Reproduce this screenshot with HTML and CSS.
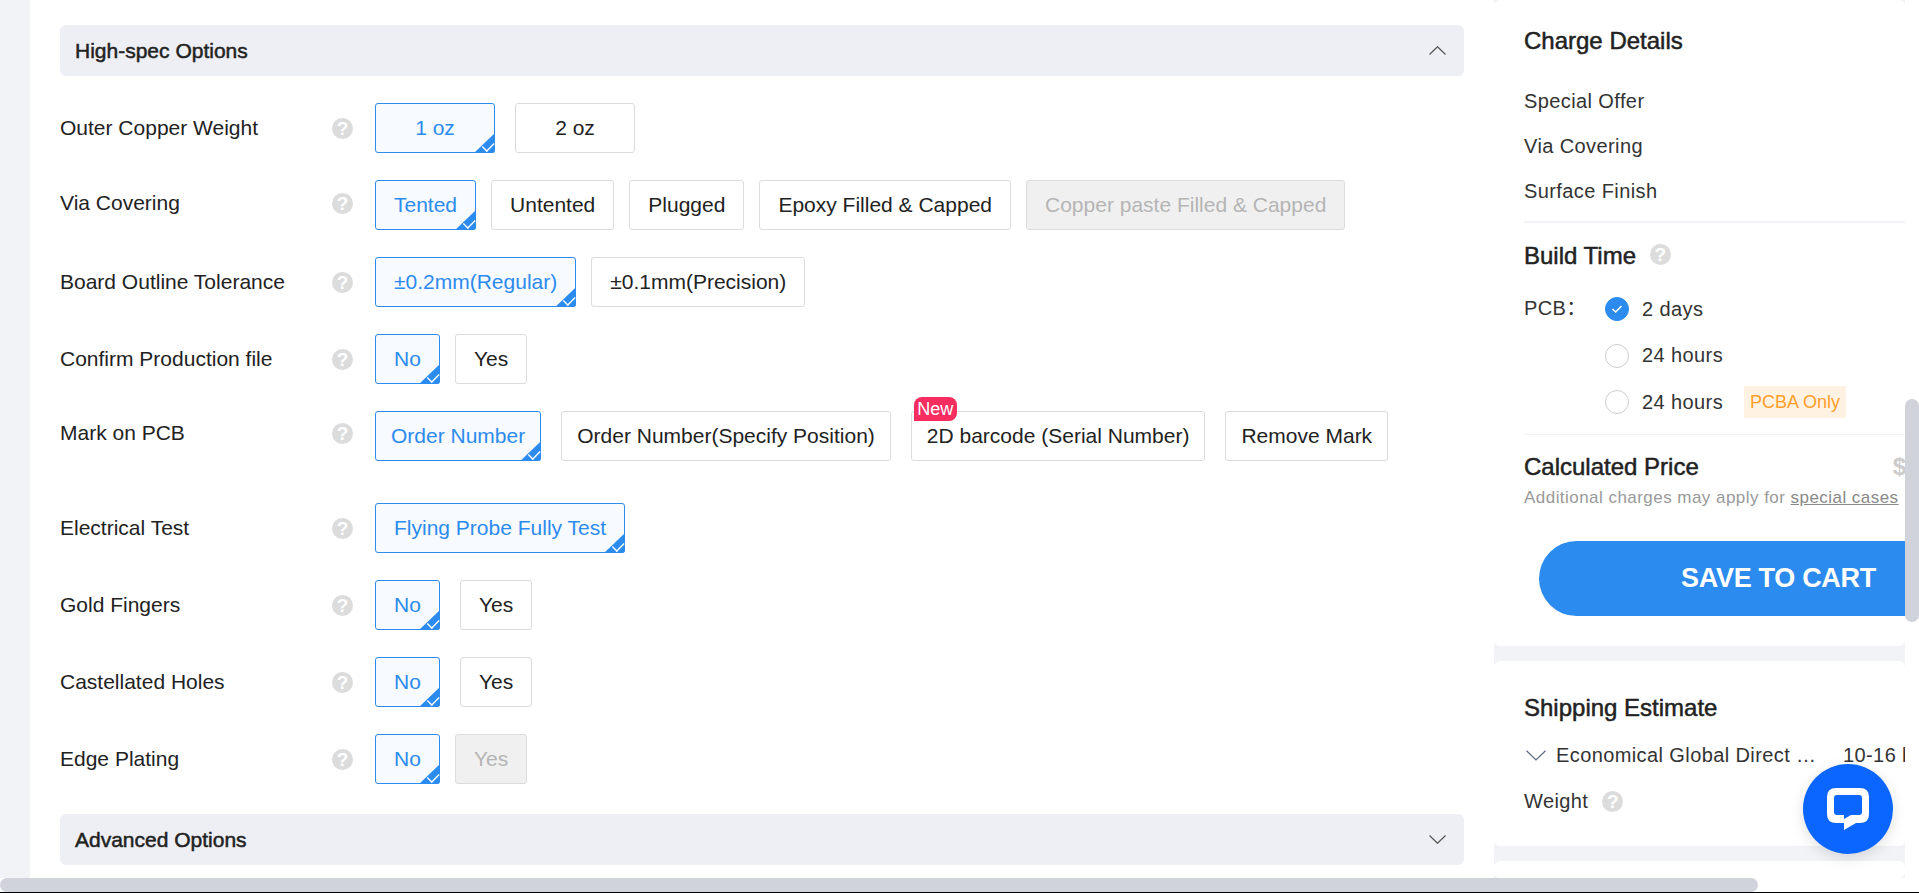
FILE: index.html
```html
<!DOCTYPE html>
<html lang="en">
  <head>
    <meta charset="UTF-8" />
    <title>PCB Order</title>
    <link rel="stylesheet" href="styles.css">
  </head>
  <body>
    <div class="page">
      <div class="strip"></div>

      <div class="main">
        <div class="panel-head">
          <span>High-spec Options</span>
          <svg class="chev" width="17" height="9" viewBox="0 0 17 9"><path d="M0.5 8.5 L8.5 0.7 L16.5 8.5" /></svg>
        </div>

        <div class="row row-wide">
          <div class="row-label"><span class="name">Outer Copper Weight</span><span class="help">?</span></div>
          <div class="opt on oz">1 oz</div>
          <div class="opt oz">2 oz</div>
        </div>

        <div class="row">
          <div class="row-label up"><span class="name">Via Covering</span><span class="help">?</span></div>
          <div class="opt on">Tented</div>
          <div class="opt">Untented</div>
          <div class="opt">Plugged</div>
          <div class="opt">Epoxy Filled &amp; Capped</div>
          <div class="opt off">Copper paste Filled &amp; Capped</div>
        </div>

        <div class="row">
          <div class="row-label"><span class="name">Board Outline Tolerance</span><span class="help">?</span></div>
          <div class="opt on">±0.2mm(Regular)</div>
          <div class="opt">±0.1mm(Precision)</div>
        </div>

        <div class="row">
          <div class="row-label"><span class="name">Confirm Production file</span><span class="help">?</span></div>
          <div class="opt on no">No</div>
          <div class="opt yes">Yes</div>
        </div>

        <div class="row row-wide row-tight">
          <div class="row-label up-more"><span class="name">Mark on PCB</span><span class="help">?</span></div>
          <div class="opt on">Order Number</div>
          <div class="opt">Order Number(Specify Position)</div>
          <div class="opt has-tag"><span class="tag">New</span>2D barcode (Serial Number)</div>
          <div class="opt">Remove Mark</div>
        </div>

        <div class="row row-after-mark">
          <div class="row-label"><span class="name">Electrical Test</span><span class="help">?</span></div>
          <div class="opt on">Flying Probe Fully Test</div>
        </div>

        <div class="row row-wide">
          <div class="row-label"><span class="name">Gold Fingers</span><span class="help">?</span></div>
          <div class="opt on no">No</div>
          <div class="opt yes">Yes</div>
        </div>

        <div class="row row-wide">
          <div class="row-label"><span class="name">Castellated Holes</span><span class="help">?</span></div>
          <div class="opt on no">No</div>
          <div class="opt yes">Yes</div>
        </div>

        <div class="row">
          <div class="row-label"><span class="name">Edge Plating</span><span class="help">?</span></div>
          <div class="opt on no">No</div>
          <div class="opt yes off">Yes</div>
        </div>

        <div class="panel-head panel-head-last">
          <span>Advanced Options</span>
          <svg class="chev" width="17" height="9" viewBox="0 0 17 9"><path d="M0.5 0.5 L8.5 8.3 L16.5 0.5" /></svg>
        </div>
      </div>

      <div class="side">
        <div class="card card-price">
          <h3 class="title title-charge">Charge Details</h3>
          <div class="charge first">Special Offer</div>
          <div class="charge">Via Covering</div>
          <div class="charge">Surface Finish</div>
          <div class="rule"></div>

          <h3 class="title title-build">Build Time <span class="help">?</span></h3>
          <div class="build">
            <div class="build-label">PCB：</div>
            <div class="build-opts">
              <div class="radio-row">
                <span class="radio checked">
                  <svg width="12" height="10" viewBox="0 0 12 10"><path d="M1.5 5 L4.7 8 L10.5 2" /></svg>
                </span>
                2 days
              </div>
              <div class="radio-row"><span class="radio"></span>24 hours</div>
              <div class="radio-row"><span class="radio"></span>24 hours<span class="only">PCBA Only</span></div>
            </div>
          </div>
          <div class="rule rule-thin"></div>

          <div class="price-line">
            <h3 class="title">Calculated Price</h3>
            <span class="price">$</span>
          </div>
          <div class="price-note">Additional charges may apply for <u>special cases</u></div>
          <div class="save">SAVE TO CART</div>
        </div>

        <div class="card card-ship">
          <h3 class="title">Shipping Estimate</h3>
          <div class="ship-row">
            <svg class="ship-chev" width="20" height="11" viewBox="0 0 20 11"><path d="M0.5 0.8 L10 10 L19.5 0.8" /></svg>
            <span class="ship-name">Economical Global Direct …</span>
            <span class="ship-days">10-16 business days</span>
          </div>
          <div class="weight">Weight <span class="help">?</span></div>
        </div>

        <div class="card card-rest"></div>
      </div>

      <div class="gutter"><div class="thumb-y"></div></div>
    </div>

    <div class="hbar"><div class="thumb-x"></div></div>

    <div class="chat">
      <svg width="42" height="42" viewBox="0 0 42 42">
        <path fill="#fff" fill-rule="evenodd" d="M9 0 H33 Q42 0 42 9 V26 Q42 35 33 35 H29 L17 42 V35 H9 Q0 35 0 26 V9 Q0 0 9 0 Z M10 7 Q7 7 7 10 V24 Q7 27 10 27 H17 V31 L24 27 H32 Q35 27 35 24 V10 Q35 7 32 7 Z" />
      </svg>
    </div>
  </body>
</html>
```

FILE: styles.css
```css
* {
  box-sizing: border-box;
}
html,
body {
  margin: 0;
  height: 100%;
  overflow: hidden;
}
body {
  font-family: "Liberation Sans", Arial, "Noto Sans CJK SC", sans-serif;
  font-size: 20px;
  color: #222;
  background: #fff;
  border-bottom: 1px solid #000;
  position: relative;
}
.page {
  display: flex;
  height: 878px;
}
.strip {
  width: 30px;
  background: #f2f3f7;
}
.main {
  width: 1464px;
  padding: 25px 30px 0;
  font-size: 21px;
}
.panel-head {
  display: flex;
  align-items: center;
  justify-content: space-between;
  height: 51px;
  padding: 1px 18px 0 15px;
  background: #eeeff4;
  border-radius: 6px;
  font-size: 21px;
  -webkit-text-stroke: 0.5px #222;
}
.panel-head-last {
  margin-top: 30px;
}
.chev {
  margin-top: -2px;
}
.chev path {
  fill: none;
  stroke: #555;
  stroke-width: 1.2;
}

.row {
  display: flex;
  align-items: center;
  gap: 15px;
  height: 50px;
  margin-top: 27px;
}
.row-wide {
  gap: 20px;
}
.row-after-mark {
  margin-top: 42px;
}
.row-label {
  display: flex;
  align-items: center;
  justify-content: space-between;
  width: 315px;
  padding-right: 22px;
  margin-right: -15px;
}
.row-wide .row-label {
  margin-right: -20px;
}
.row-label.up {
  margin-bottom: 4px;
}
.row-label.up-more {
  margin-bottom: 6px;
}
.help {
  display: inline-block;
  flex: none;
  width: 21px;
  height: 21px;
  line-height: 21px;
  border-radius: 50%;
  background: #dcdcdc;
  color: #fff;
  font-size: 19px;
  font-weight: 700;
  text-align: center;
  letter-spacing: 0;
  -webkit-text-stroke: 0;
}

.opt {
  position: relative;
  display: flex;
  align-items: center;
  justify-content: center;
  height: 50px;
  padding: 0 18px;
  border: 1px solid #dcdcdc;
  border-radius: 3px;
  color: #222;
  white-space: nowrap;
}
.row-tight .opt {
  padding: 0 15px;
}
.oz {
  width: 120px;
}
.no {
  width: 65px;
}
.yes {
  width: 72px;
}
.on {
  border-color: #2c8bee;
  background: #f7faff;
  color: #2c8bee;
}
.on::after {
  content: "";
  position: absolute;
  right: -1px;
  bottom: -1px;
  width: 21px;
  height: 20px;
  background: #2c8bee;
  clip-path: polygon(100% 0, 100% 100%, 0 100%);
  border-bottom-right-radius: 3px;
}
.on::before {
  content: "";
  position: absolute;
  z-index: 1;
  right: 2.5px;
  bottom: 4.75px;
  width: 7px;
  height: 3.5px;
  border-left: 1px solid #fff;
  border-bottom: 1px solid #fff;
  transform: rotate(-45deg) scale(1.4);
}
.off {
  background: #f0f0f0;
  color: #b5b5b5;
}
.tag {
  position: absolute;
  left: 2px;
  top: -15px;
  width: 43px;
  height: 24px;
  line-height: 24px;
  border-radius: 8px 8px 8px 0;
  background: #f72c5f;
  color: #fff;
  font-size: 18px;
  text-align: center;
}

.side {
  width: 411px;
  display: flex;
  flex-direction: column;
  gap: 15px;
  background: #f2f3f7;
  overflow: hidden;
}
.card {
  flex: none;
  background: #fff;
  padding-left: 30px;
  border-radius: 6px;
  overflow: hidden;
}
.card-price {
  height: 646px;
  padding-top: 26px;
}
.card-ship {
  height: 185px;
  padding-top: 32px;
}
.card-rest {
  flex: 1;
}
.title {
  margin: 0;
  font-size: 24px;
  font-weight: 400;
  line-height: 30px;
  -webkit-text-stroke: 0.5px #222;
}
.charge {
  line-height: 45px;
  color: #333;
  letter-spacing: 0.4px;
}
.charge.first {
  margin-top: 23px;
}
.rule {
  height: 2px;
  margin-top: 7px;
  background: #f2f3f7;
}
.title-build {
  margin-top: 18px;
}
.title-build .help {
  margin-left: 7px;
  vertical-align: 3px;
}
.build {
  display: flex;
  margin-top: 15px;
  letter-spacing: 0.4px;
  color: #333;
}
.build-label {
  width: 81px;
  line-height: 44px;
}
.radio-row {
  display: flex;
  align-items: center;
  height: 46.5px;
}
.radio {
  display: flex;
  align-items: center;
  justify-content: center;
  width: 24px;
  height: 24px;
  margin-right: 13px;
  border: 1px solid #ccc;
  border-radius: 50%;
}
.radio.checked {
  background: #2c8bee;
  border-color: #2c8bee;
}
.radio path {
  fill: none;
  stroke: #fff;
  stroke-width: 1.6;
}
.only {
  height: 32px;
  line-height: 32px;
  margin-left: 21px;
  padding: 0 6px;
  background: #fff2e3;
  color: #ff9f2a;
  font-size: 18px;
  letter-spacing: 0;
}
.rule-thin {
  height: 1px;
  margin-top: 8.5px;
}
.price-line {
  display: flex;
  justify-content: space-between;
  margin-top: 17px;
}
.price {
  font-size: 24px;
  line-height: 30px;
  font-weight: 700;
  color: #ccc;
  margin-right: -1px;
}
.price-note {
  margin-top: 4px;
  line-height: 24px;
  font-size: 17px;
  color: #999;
  letter-spacing: 0.46px;
  white-space: nowrap;
}
.price-note u {
  color: #888;
}
.save {
  width: 479px;
  height: 75px;
  line-height: 75px;
  margin: 31px 0 0 15px;
  border-radius: 38px;
  background: #2c8bee;
  color: #fff;
  font-size: 27px;
  font-weight: 700;
  letter-spacing: -0.3px;
  text-align: center;
}
.ship-row {
  display: flex;
  align-items: center;
  height: 46px;
  margin-top: 9px;
  color: #333;
  letter-spacing: 0.4px;
  white-space: nowrap;
}
.ship-chev {
  flex: none;
  margin: 0 10px 0 2px;
}
.ship-chev path {
  fill: none;
  stroke: #5b6b84;
  stroke-width: 1.2;
}
.ship-name {
  flex: none;
  width: 287px;
}
.weight {
  line-height: 46px;
  color: #333;
  letter-spacing: 0.4px;
}
.weight .help {
  margin-left: 8px;
  line-height: 21px;
  vertical-align: 0;
}

.gutter {
  width: 14px;
}
.thumb-y {
  margin-top: 399px;
  height: 223px;
  background: #d0d3da;
  border-radius: 7px;
}
.hbar {
  height: 14px;
}
.thumb-x {
  width: 1758px;
  height: 14px;
  background: #d0d3da;
  border-radius: 7px;
}
.chat {
  position: absolute;
  left: 1803px;
  top: 764px;
  display: flex;
  align-items: center;
  justify-content: center;
  width: 90px;
  height: 90px;
  border-radius: 50%;
  background: #0a66ff;
  box-shadow: 0 4px 14px rgba(0, 0, 0, 0.12);
}
```
